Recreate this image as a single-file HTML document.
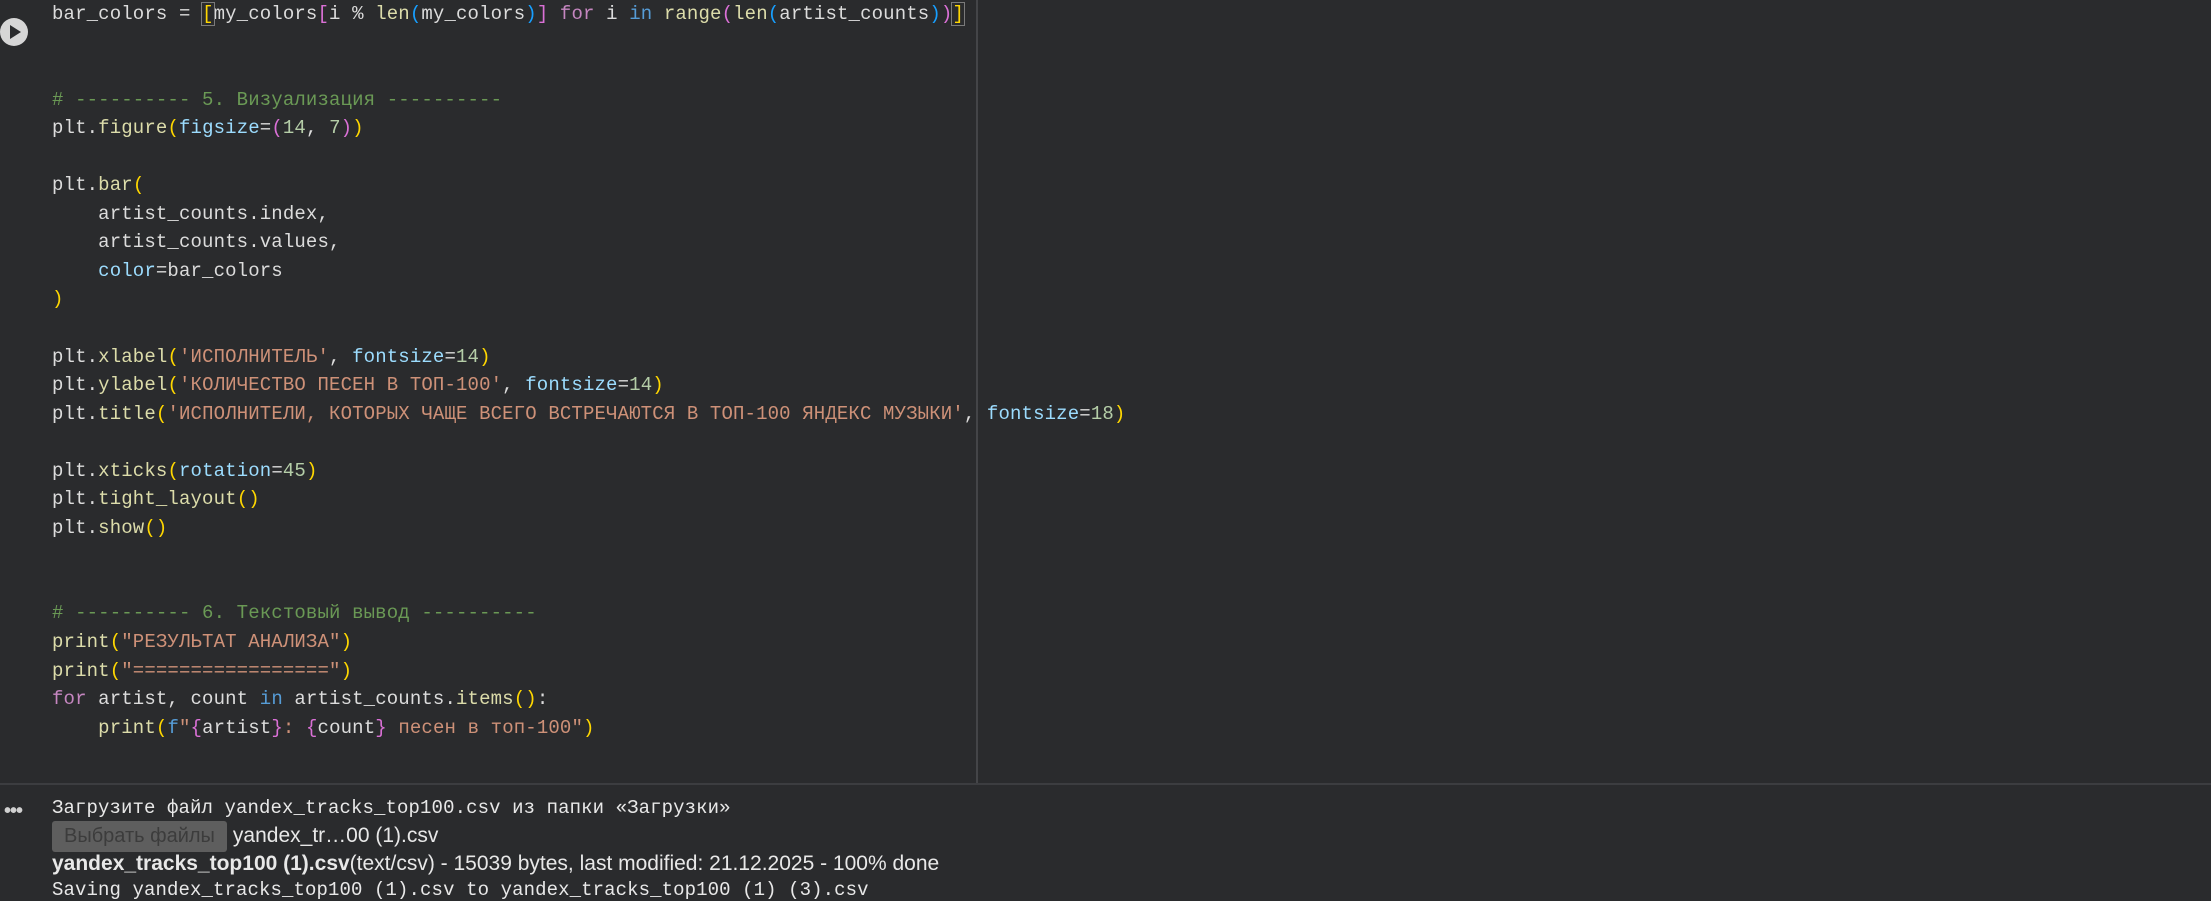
<!DOCTYPE html>
<html><head><meta charset="utf-8"><style>
html,body{margin:0;padding:0;width:2211px;height:900px;overflow:hidden;background:#2a2b2d;}
.code{position:absolute;left:0;top:0;width:2211px;height:783px;background:#2a2b2d;}
.div{position:absolute;left:976px;top:0;width:2px;height:783px;background:#444548;}
.hr{position:absolute;left:0;top:783px;width:2211px;height:2px;background:#3c3d40;}
pre{margin:0;position:absolute;left:52px;top:0;font-family:"Liberation Mono","DejaVu Sans Mono",monospace;font-size:19px;letter-spacing:0.14px;line-height:28.54px;color:#dcdcdc;}
.c{color:#6a9955}.s{color:#ce9178}.n{color:#b5cea8}.k{color:#c586c0}.b{color:#569cd6}.f{color:#dcdcaa}.p{color:#9cdcfe}
.g{color:#ffd700}.o{color:#da70d6}.u{color:#179fff}
.box{outline:1px solid #7a7a7a;}
.run{position:absolute;left:0;top:18px;width:28px;height:28px;border-radius:50%;background:#d6d6d6;}
.run:after{content:"";position:absolute;left:10px;top:7px;border-left:11px solid #2a2b2d;border-top:7px solid transparent;border-bottom:7px solid transparent;}
.out{position:absolute;left:52px;font-size:19px;color:#e8e8e8;white-space:pre;}
.mono{font-family:"Liberation Mono","Noto Sans CJK SC",monospace;letter-spacing:0.1px}
.sans{font-family:"Liberation Sans",sans-serif;font-size:21px;}
.btn{display:inline-block;background:#5e5e5e;color:#3c3c3c;border-radius:3px;padding:2px 12px;margin-right:6px;height:27px;line-height:27px;vertical-align:middle;font-size:20px}
.dots{position:absolute;left:4px;top:800px;color:#d0d0d0;font-family:"Liberation Sans",sans-serif;font-size:20px;font-weight:bold;letter-spacing:-1px}
</style></head><body>
<div class="code"></div><div class="div"></div><div class="hr"></div>
<div class="run"></div>
<pre>bar_colors = <span class="g box">[</span>my_colors<span class="o">[</span>i % <span class="f">len</span><span class="u">(</span>my_colors<span class="u">)</span><span class="o">]</span> <span class="k">for</span> i <span class="b">in</span> <span class="f">range</span><span class="o">(</span><span class="f">len</span><span class="u">(</span>artist_counts<span class="u">)</span><span class="o">)</span><span class="g box">]</span>


<span class="c"># ---------- 5. Визуализация ----------</span>
plt.<span class="f">figure</span><span class="g">(</span><span class="p">figsize</span>=<span class="o">(</span><span class="n">14</span>, <span class="n">7</span><span class="o">)</span><span class="g">)</span>

plt.<span class="f">bar</span><span class="g">(</span>
    artist_counts.index,
    artist_counts.values,
    <span class="p">color</span>=bar_colors
<span class="g">)</span>

plt.<span class="f">xlabel</span><span class="g">(</span><span class="s">'ИСПОЛНИТЕЛЬ'</span>, <span class="p">fontsize</span>=<span class="n">14</span><span class="g">)</span>
plt.<span class="f">ylabel</span><span class="g">(</span><span class="s">'КОЛИЧЕСТВО ПЕСЕН В ТОП-100'</span>, <span class="p">fontsize</span>=<span class="n">14</span><span class="g">)</span>
plt.<span class="f">title</span><span class="g">(</span><span class="s">'ИСПОЛНИТЕЛИ, КОТОРЫХ ЧАЩЕ ВСЕГО ВСТРЕЧАЮТСЯ В ТОП-100 ЯНДЕКС МУЗЫКИ'</span>, <span class="p">fontsize</span>=<span class="n">18</span><span class="g">)</span>

plt.<span class="f">xticks</span><span class="g">(</span><span class="p">rotation</span>=<span class="n">45</span><span class="g">)</span>
plt.<span class="f">tight_layout</span><span class="g">()</span>
plt.<span class="f">show</span><span class="g">()</span>


<span class="c"># ---------- 6. Текстовый вывод ----------</span>
<span class="f">print</span><span class="g">(</span><span class="s">"РЕЗУЛЬТАТ АНАЛИЗА"</span><span class="g">)</span>
<span class="f">print</span><span class="g">(</span><span class="s">"================="</span><span class="g">)</span>
<span class="k">for</span> artist, count <span class="b">in</span> artist_counts.<span class="f">items</span><span class="g">()</span>:
    <span class="f">print</span><span class="g">(</span><span class="b">f</span><span class="s">"</span><span class="o">{</span>artist<span class="o">}</span><span class="s">: </span><span class="o">{</span>count<span class="o">}</span><span class="s"> песен в топ-100"</span><span class="g">)</span></pre>
<div class="dots">•••</div>
<div class="out mono" style="top:797px">Загрузите файл yandex_tracks_top100.csv из папки «Загрузки»</div>
<div class="out sans" style="top:821px"><span class="btn">Выбрать файлы</span>yandex_tr…00 (1).csv</div>
<div class="out sans" style="top:852px"><b>yandex_tracks_top100 (1).csv</b>(text/csv) - 15039 bytes, last modified: 21.12.2025 - 100% done</div>
<div class="out mono" style="top:879px">Saving yandex_tracks_top100 (1).csv to yandex_tracks_top100 (1) (3).csv</div>
</body></html>
